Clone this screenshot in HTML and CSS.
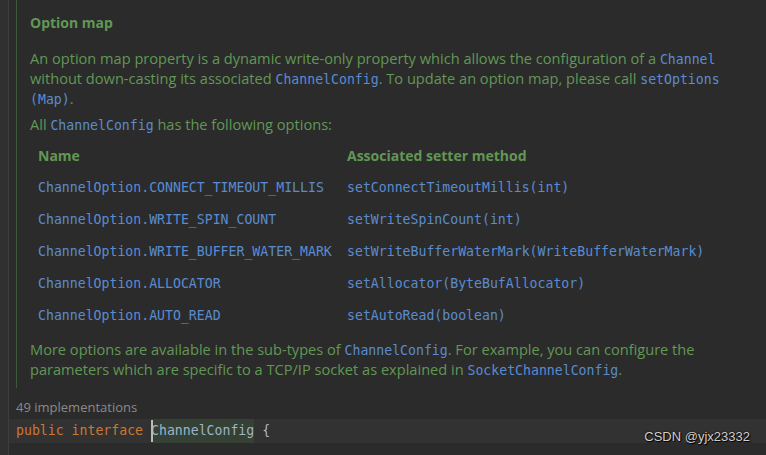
FILE: index.html
```html
<!DOCTYPE html>
<html>
<head>
<meta charset="utf-8">
<link rel="stylesheet" href="styles.css">
</head>
<body>
<div class="gutter"></div>
<div class="main">
  <div class="doc">
    <div class="title">Option map</div>
    <p class="para">An option map property is a dynamic write-only property which allows the configuration of a <code>Channel</code><br>without down-casting its associated <code>ChannelConfig</code>. To update an option map, please call <code>setOptions</code><br><code>(Map)</code>.</p>
    <p class="para p2">All <code>ChannelConfig</code> has the following options:</p>
    <div class="table">
      <div class="th">Name</div><div class="th">Associated setter method</div>
      <div class="td">ChannelOption.CONNECT_TIMEOUT_MILLIS</div><div class="td">setConnectTimeoutMillis(int)</div>
      <div class="td">ChannelOption.WRITE_SPIN_COUNT</div><div class="td">setWriteSpinCount(int)</div>
      <div class="td">ChannelOption.WRITE_BUFFER_WATER_MARK</div><div class="td">setWriteBufferWaterMark(WriteBufferWaterMark)</div>
      <div class="td">ChannelOption.ALLOCATOR</div><div class="td">setAllocator(ByteBufAllocator)</div>
      <div class="td">ChannelOption.AUTO_READ</div><div class="td">setAutoRead(boolean)</div>
    </div>
    <p class="para p3">More options are available in the sub-types of <code>ChannelConfig</code>. For example, you can configure the<br>parameters which are specific to a TCP/IP socket as explained in <code>SocketChannelConfig</code>.</p>
  </div>
  <div class="impl">49 implementations</div>
  <div class="codeline"><span class="kw">public</span> <span class="kw">interface</span> <span class="sel"><span class="caret"></span>ChannelConfig</span> <span class="brace">{</span></div>
  <div class="watermark">CSDN @yjx23332</div>
</div>
</body>
</html>
```
FILE: styles.css
```css
html, body {
  margin: 0;
  padding: 0;
  background: #2b2b2b;
  height: 455px;
  overflow: hidden;
}
body {
  display: flex;
  font-family: "Open Sans", "Noto Sans", sans-serif;
}
.gutter {
  width: 8px;
  background: #303030;
  border-right: 1px solid #3e3e3e;
  flex: none;
}
.main {
  flex: 1;
  display: flex;
  flex-direction: column;
  position: relative;
}
.doc {
  margin-left: 7px;
  border-left: 1px solid #3d5a39;
  padding: 13px 0 9px 13px;
  color: #629755;
  font-size: 14.6px;
  line-height: 20px;
}
.title {
  font-weight: bold;
  font-size: 14px;
  margin-bottom: 15px;
}
.para {
  margin: 0;
}
.p2 {
  margin-top: 6px;
}
.p3 {
  margin-top: 7px;
}
code {
  font-family: "DejaVu Sans Mono", monospace;
  font-size: 13.2px;
  line-height: 14px;
  color: #5a8bd0;
}
.table {
  display: grid;
  grid-template-columns: 309px auto;
  margin: 6px 0 0 8px;
}
.th {
  font-weight: bold;
  font-size: 14px;
  line-height: 32px;
}
.td {
  font-family: "DejaVu Sans Mono", monospace;
  font-size: 13.2px;
  line-height: 32px;
  color: #5a8bd0;
  white-space: nowrap;
}
.impl {
  margin: 9px 0 0 7px;
  color: #8a8a8a;
  font-size: 13px;
  line-height: 20px;
}
.codeline {
  margin-top: 2px;
  background: #323232;
  height: 24px;
  line-height: 24px;
  padding-left: 7px;
  font-family: "DejaVu Sans Mono", monospace;
  font-size: 13.2px;
  color: #a9b7c6;
  white-space: pre;
}
.kw {
  color: #cc7832;
}
.sel {
  display: inline-block;
  position: relative;
  background: #344134;
  color: #9fb3c8;
}
.caret {
  position: absolute;
  left: 0;
  top: 1px;
  width: 2px;
  height: 22px;
  background: #bbbbbb;
}
.brace {
  color: #a9b7c6;
}
.watermark {
  position: absolute;
  right: 16px;
  bottom: 11px;
  font-family: "Liberation Sans", Arial, sans-serif;
  font-size: 13px;
  color: #cfcfcf;
  text-shadow: 0 0 2px #000, 1px 1px 1px #000;
}
```
